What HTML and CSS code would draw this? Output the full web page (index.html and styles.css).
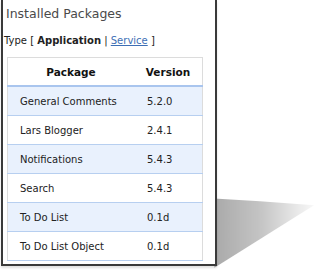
FILE: index.html
```html
<!DOCTYPE html>
<html>
<head>
<meta charset="utf-8">
<link rel="stylesheet" href="styles.css">
</head>
<body>
<div class="stage">
  <div class="shadow"></div>
  <div class="frame">
    <h1 class="title">Installed Packages</h1>
    <p class="type">Type [ <b>Application</b> | <a href="#">Service</a> ]</p>
    <table class="pkgs">
      <thead>
        <tr><th class="c1">Package</th><th class="c2">Version</th></tr>
      </thead>
      <tbody>
        <tr class="alt"><td class="c1">General Comments</td><td class="c2">5.2.0</td></tr>
        <tr><td class="c1">Lars Blogger</td><td class="c2">2.4.1</td></tr>
        <tr class="alt"><td class="c1">Notifications</td><td class="c2">5.4.3</td></tr>
        <tr><td class="c1">Search</td><td class="c2">5.4.3</td></tr>
        <tr class="alt"><td class="c1">To Do List</td><td class="c2">0.1d</td></tr>
        <tr><td class="c1">To Do List Object</td><td class="c2">0.1d</td></tr>
      </tbody>
    </table>
  </div>
</div>
</body>
</html>
```
FILE: styles.css
```css
html, body {
  margin: 0;
  padding: 0;
  background: #fff;
}
body {
  font-family: "DejaVu Sans", sans-serif;
  color: #222;
  width: 318px;
  height: 271px;
  overflow: hidden;
}
.stage {
  position: relative;
  width: 318px;
  height: 271px;
}
.frame {
  position: relative;
  margin-left: 1px;
  width: 212px;
  height: 264px;
  border-left: 2px solid #3a3a3a;
  border-right: 2px solid #3a3a3a;
  border-bottom: 2px solid #3a3a3a;
  background: #fff;
  overflow: hidden;
  box-shadow: 0 2px 2px rgba(0,0,0,0.12);
}
.shadow {
  position: absolute;
  left: 214px;
  top: 170px;
  width: 102px;
  height: 98px;
  background: linear-gradient(90deg, #a9a9a9 0%, #c4c4c4 45%, #ececec 85%, #fafafa 100%);
  clip-path: polygon(0 29%, 45% 32%, 98% 36%, 0 100%);
  filter: blur(1px);
}
.title {
  margin: 0;
  padding: 6px 0 0 3px;
  font-size: 12.5px;
  font-weight: normal;
  color: #4a4a4a;
  line-height: 16px;
}
.type {
  margin: 12px 0 0 1px;
  font-size: 10px;
  line-height: 13px;
  color: #222;
}
.type a {
  color: #3d6fb5;
  text-decoration: underline;
}
.pkgs {
  margin: 10px 0 0 4px;
  width: 196px;
  border-collapse: collapse;
  font-size: 10px;
  border: 1px solid #dcdcdc;
  border-bottom: none;
}
.pkgs th {
  font-weight: bold;
  font-size: 10.5px;
  height: 27px;
  text-align: center;
  border-bottom: 2px solid #a9c5ee;
  padding: 0;
  color: #111;
}
.pkgs td {
  height: 28px;
  padding: 0;
  border-bottom: 1px solid #b7cff0;
}
.pkgs .c1 {
  width: 126px;
}
.pkgs td.c1 {
  padding-left: 12px;
  width: 114px;
}
.pkgs td.c2 {
  padding-left: 13px;
}
.pkgs tr.alt td {
  background: #e9f1fd;
}
```
